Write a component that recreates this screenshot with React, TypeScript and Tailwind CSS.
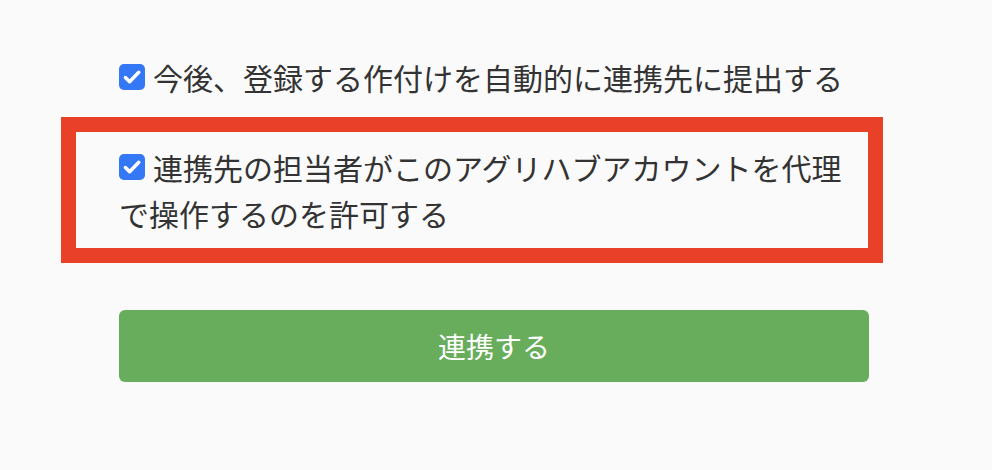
import React, { useState } from 'react'

const font = "font-['Hiragino_Sans','Noto_Sans_CJK_JP',sans-serif]"

function CheckMark({ checked, onToggle }: { checked: boolean; onToggle: () => void }) {
  return (
    <span
      role="checkbox"
      aria-checked={checked}
      onClick={onToggle}
      className={`mr-[8px] mt-[10px] inline-flex h-[26px] w-[26px] cursor-pointer items-center justify-center rounded-[5px] align-top ${
        checked ? 'bg-[#3478f6]' : 'border border-gray-400 bg-white'
      }`}
    >
      {checked && (
        <svg viewBox="0 0 24 24" className="h-[22px] w-[22px]" fill="none">
          <path d="M4.8 12.6l4.6 4.6L19.4 6.9" stroke="#fff" strokeWidth="3.8" strokeLinecap="round" strokeLinejoin="round" />
        </svg>
      )}
    </span>
  )
}

export default function App() {
  const [autoSubmit, setAutoSubmit] = useState(true)
  const [allowProxy, setAllowProxy] = useState(true)

  return (
    <div className={`min-h-[470px] w-[992px] bg-[#fafafa] text-[#333] ${font}`}>
      <div className="ml-[119px] w-[750px] pt-[54px]">
        {/* auto submit */}
        <p className="text-[30px] leading-[46px]">
          <CheckMark checked={autoSubmit} onToggle={() => setAutoSubmit(!autoSubmit)} />
          今後、登録する作付けを自動的に連携先に提出する
        </p>

        {/* proxy permission, highlighted */}
        <div className="-ml-[58px] mt-[17px] w-[822px] border-[15px] border-[#e94128] py-[12px] pl-[43px] pr-0">
          <p className="text-[30px] leading-[46px]">
            <CheckMark checked={allowProxy} onToggle={() => setAllowProxy(!allowProxy)} />
            連携先の担当者がこのアグリハブアカウントを代理で操作するのを許可する
          </p>
        </div>

        <button className="mt-[47px] flex h-[72px] w-[750px] items-center justify-center rounded-[6px] bg-[#68ad5c] text-[28px] text-white">
          連携する
        </button>
      </div>
    </div>
  )
}
